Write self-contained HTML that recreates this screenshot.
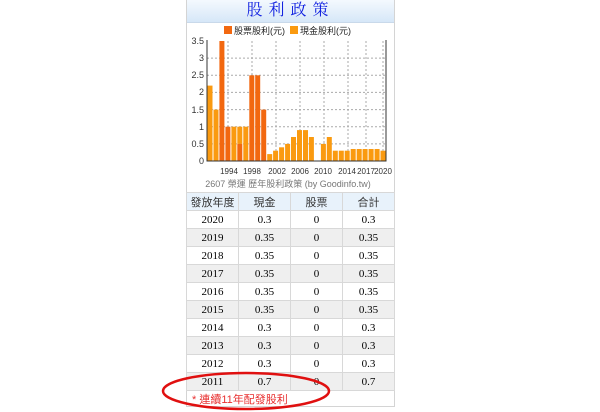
<!DOCTYPE html>
<html><head><meta charset="utf-8"><style>
body{margin:0;width:600px;height:412px;background:#fff;position:relative;overflow:hidden;font-family:"Liberation Sans","Noto Sans CJK TC",sans-serif}
.panel{position:absolute;left:186px;top:0;width:207px;height:406px;border:1px solid #d4d4d4;border-top:none}
.title{height:22px;background:linear-gradient(#f4f9fe,#d6e7f8);border-bottom:1px solid #c9d9ea;text-align:center;color:#1020e0;font-size:16px;line-height:22px;letter-spacing:6px;font-family:"Liberation Serif","Noto Serif CJK SC",serif}
table{position:absolute;left:186px;top:192px;border-collapse:collapse;font-family:"Liberation Serif","Noto Serif CJK SC",serif;font-size:11px}
td{border:1px solid #d8d8d8;width:51px;height:17px;padding:0;text-align:center}
tr.h td{background:#e8f2fb;font-family:"Liberation Sans","Noto Sans CJK TC",sans-serif;color:#333}
tr.g td{background:#efefef}
.note{position:absolute;left:192px;top:391px;color:#e83030;font-size:11px}
</style></head><body>
<div class="panel"><div class="title">股利政策</div></div>
<svg width="600" height="412" style="position:absolute;left:0;top:0" font-family="Liberation Sans, Noto Sans CJK TC, sans-serif">
<rect x="224" y="26" width="8" height="8" fill="#f26810"/><text x="234" y="34" font-size="9" fill="#222">股票股利(元)</text>
<rect x="290" y="26" width="8" height="8" fill="#fa9a10"/><text x="300" y="34" font-size="9" fill="#222">現金股利(元)</text>
<g stroke="#aaa" stroke-dasharray="2,2" stroke-width="1">
<line x1="207" x2="386" y1="143.9" y2="143.9"/><line x1="207" x2="386" y1="126.7" y2="126.7"/><line x1="207" x2="386" y1="109.6" y2="109.6"/><line x1="207" x2="386" y1="92.4" y2="92.4"/><line x1="207" x2="386" y1="75.3" y2="75.3"/><line x1="207" x2="386" y1="58.1" y2="58.1"/>
<line x1="228" x2="228" y1="41" y2="161"/><line x1="252" x2="252" y1="41" y2="161"/><line x1="276" x2="276" y1="41" y2="161"/><line x1="300" x2="300" y1="41" y2="161"/><line x1="324" x2="324" y1="41" y2="161"/><line x1="348" x2="348" y1="41" y2="161"/><line x1="366" x2="366" y1="41" y2="161"/><line x1="383" x2="383" y1="41" y2="161"/>
</g>
<g fill="#fa9a10">
<rect x="207.5" y="85.6" width="5" height="75.4"/><rect x="213.5" y="109.6" width="5" height="51.4"/>
<rect x="231.4" y="126.7" width="5" height="34.3"/><rect x="237.3" y="126.7" width="5" height="17.2"/><rect x="243.3" y="126.7" width="5" height="34.3"/>
<rect x="267.2" y="154.1" width="5" height="6.9"/><rect x="273.1" y="150.7" width="5" height="10.3"/><rect x="279.1" y="147.3" width="5" height="13.7"/><rect x="285.1" y="143.9" width="5" height="17.1"/><rect x="291" y="137" width="5" height="24"/><rect x="297" y="130.1" width="5" height="30.9"/><rect x="303" y="130.1" width="5" height="30.9"/><rect x="308.9" y="137" width="5" height="24"/>
<rect x="320.9" y="143.9" width="5" height="17.1"/><rect x="326.8" y="137" width="5" height="24"/><rect x="332.8" y="150.7" width="5" height="10.3"/><rect x="338.8" y="150.7" width="5" height="10.3"/><rect x="344.7" y="150.7" width="5" height="10.3"/>
<rect x="350.7" y="149" width="5" height="12"/><rect x="356.7" y="149" width="5" height="12"/><rect x="362.6" y="149" width="5" height="12"/><rect x="368.6" y="149" width="5" height="12"/><rect x="374.6" y="149" width="5" height="12"/><rect x="380.5" y="150.7" width="5" height="10.3"/>
</g>
<g fill="#f26810">
<rect x="219.4" y="41" width="5" height="120"/><rect x="225.4" y="126.7" width="5" height="34.3"/><rect x="237.3" y="143.9" width="5" height="17.1"/>
<rect x="249.3" y="75.3" width="5" height="85.7"/><rect x="255.2" y="75.3" width="5" height="85.7"/><rect x="261.2" y="109.6" width="5" height="51.4"/>
</g>
<polyline points="207,40 207,161 386,161 386,40" fill="none" stroke="#333" stroke-width="1"/>
<g font-size="9" fill="#333" text-anchor="end">
<text x="204" y="44">3.5</text><text x="204" y="61">3</text><text x="204" y="78">2.5</text><text x="204" y="95">2</text><text x="204" y="113">1.5</text><text x="204" y="130">1</text><text x="204" y="147">0.5</text><text x="204" y="164">0</text>
</g>
<g font-size="8" fill="#333" text-anchor="middle">
<text x="229" y="174">1994</text><text x="252" y="174">1998</text><text x="277" y="174">2002</text><text x="300" y="174">2006</text><text x="323" y="174">2010</text><text x="347" y="174">2014</text><text x="366" y="174">2017</text><text x="383" y="174">2020</text>
</g>
<text x="288" y="187" font-size="9" fill="#777" text-anchor="middle">2607 榮運 歷年股利政策 (by Goodinfo.tw)</text>
</svg>
<table>
<tr class="h"><td>發放年度</td><td>現金</td><td>股票</td><td>合計</td></tr>
<tr><td>2020</td><td>0.3</td><td>0</td><td>0.3</td></tr>
<tr class="g"><td>2019</td><td>0.35</td><td>0</td><td>0.35</td></tr>
<tr><td>2018</td><td>0.35</td><td>0</td><td>0.35</td></tr>
<tr class="g"><td>2017</td><td>0.35</td><td>0</td><td>0.35</td></tr>
<tr><td>2016</td><td>0.35</td><td>0</td><td>0.35</td></tr>
<tr class="g"><td>2015</td><td>0.35</td><td>0</td><td>0.35</td></tr>
<tr><td>2014</td><td>0.3</td><td>0</td><td>0.3</td></tr>
<tr class="g"><td>2013</td><td>0.3</td><td>0</td><td>0.3</td></tr>
<tr><td>2012</td><td>0.3</td><td>0</td><td>0.3</td></tr>
<tr class="g"><td>2011</td><td>0.7</td><td>0</td><td>0.7</td></tr>
</table>
<div class="note">* 連續11年配發股利</div>
<svg width="600" height="412" style="position:absolute;left:0;top:0"><ellipse cx="246" cy="391" rx="83" ry="18" fill="none" stroke="#e01010" stroke-width="2.5"/></svg>
</body></html>
